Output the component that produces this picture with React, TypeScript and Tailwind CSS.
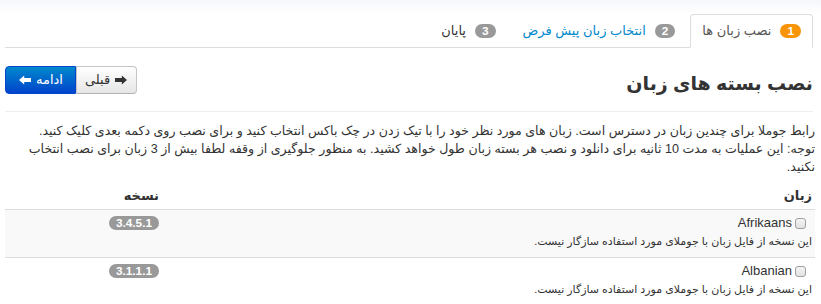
import React from "react";

function Arrow({ dir }: { dir: "left" | "right" }) {
  const d =
    dir === "left"
      ? "M0 5L5.2 0.4V3.1H12V6.9H5.2V9.6Z"
      : "M12 5L6.8 0.4V3.1H0V6.9H6.8V9.6Z";
  return (
    <svg width="12" height="10" viewBox="0 0 12 10" className="shrink-0">
      <path d={d} fill="currentColor" />
    </svg>
  );
}

function Badge({ n, color }: { n: string; color: string }) {
  return (
    <span
      className={`inline-block rounded-full px-[7px] text-[11.8px] font-bold leading-[14px] text-white ${color}`}
    >
      {n}
    </span>
  );
}

const langs = [
  { name: "Afrikaans", version: "3.4.5.1" },
  { name: "Albanian", version: "3.1.1.1" },
];

export default function App() {
  return (
    <div
      dir="rtl"
      className="min-h-[304px] bg-[linear-gradient(to_bottom,#f5f7fb_0px,#ffffff_14px)] pl-[5px] pr-[6px] font-['Liberation_Sans','DejaVu_Sans',sans-serif] text-[13px] text-[#333]"
    >
      {/* steps */}
      <ul className="mr-[2px] flex gap-[3px] border-b border-[#ddd] pt-[14px]">
        <li className="-mb-px">
          <div className="flex items-center gap-[9px] rounded-t-[4px] border border-[#ddd] border-b-transparent bg-white px-[11px] py-[7px] leading-[18px] text-[#555]">
            <Badge n="1" color="bg-[#f89406]" />
            <span>نصب زبان ها</span>
          </div>
        </li>
        <li className="-mb-px">
          <div className="flex items-center gap-[9px] border border-transparent px-[11px] py-[7px] leading-[18px] text-[#0088cc]">
            <Badge n="2" color="bg-[#999]" />
            <span>انتخاب زبان پیش فرض</span>
          </div>
        </li>
        <li className="-mb-px">
          <div className="flex items-center gap-[9px] border border-transparent px-[11px] py-[7px] leading-[18px] text-[#333]">
            <Badge n="3" color="bg-[#999]" />
            <span>پایان</span>
          </div>
        </li>
      </ul>

      {/* header */}
      <div className="mr-[2px] mt-[18px] flex items-start justify-between border-b border-[#eee] pb-[13px]">
        <h1 className="mt-[4px] text-[19px] font-bold leading-[28px] text-[#333]">
          نصب بسته های زبان
        </h1>
        <div className="flex h-[28px]">
          <button className="flex items-center gap-[5px] rounded-r-[4px] border border-[#c5c5c5] border-b-[#b3b3b3] bg-[linear-gradient(to_bottom,#ffffff,#e6e6e6)] pl-[8px] pr-[9px] leading-[18px] text-[#333]">
            <Arrow dir="right" />
            <span>قبلی</span>
          </button>
          <button className="flex items-center gap-[5px] rounded-l-[4px] border border-[#0044cc] bg-[linear-gradient(to_bottom,#0088cc,#0044cc)] pl-[13px] pr-[12px] leading-[18px] text-white">
            <span>ادامه</span>
            <Arrow dir="left" />
          </button>
        </div>
      </div>

      <p className="mt-[10px] text-[12.6px] leading-[18px]">
        رابط جوملا برای چندین زبان در دسترس است. زبان های مورد نظر خود را با تیک زدن در چک باکس انتخاب کنید و برای نصب روی دکمه بعدی کلیک کنید.
        <br />
        توجه: این عملیات به مدت 10 ثانیه برای دانلود و نصب هر بسته زبان طول خواهد کشید. به منظور جلوگیری از وقفه لطفا بیش از 3 زبان برای نصب انتخاب نکنید.
      </p>

      {/* table */}
      <div className="mt-[7px]">
        <div className="grid grid-cols-[1fr_159px] font-bold leading-[18px]">
          <div className="py-[4px] pl-[5px] pr-[3px]">زبان</div>
          <div className="px-[5px] py-[4px]">نسخه</div>
        </div>
        {langs.map((l, i) => (
          <div
            key={l.name}
            className={`grid grid-cols-[1fr_159px] border-t border-[#ddd] ${i % 2 === 0 ? "bg-[#f9f9f9]" : "bg-white"}`}
          >
            <div className="pb-[7px] pl-[5px] pr-[3px] pt-[4px]">
              <div className="flex h-[18px] items-center">
                <span className="mr-[6px] h-[11px] w-[11px] rounded-[3px] border border-[#a0a0a0] bg-[linear-gradient(to_bottom,#f4f4f4,#e2e2e2)]" />
                <span className="mr-[3px]">{l.name}</span>
              </div>
              <div className="text-[11px] leading-[18px]">
                این نسخه از فایل زبان با جوملای مورد استفاده سازگار نیست.
              </div>
            </div>
            <div className="px-[5px] pt-[4px]">
              <div className="flex h-[18px] items-center">
                <Badge n={l.version} color="bg-[#999]" />
              </div>
            </div>
          </div>
        ))}
      </div>
    </div>
  );
}
